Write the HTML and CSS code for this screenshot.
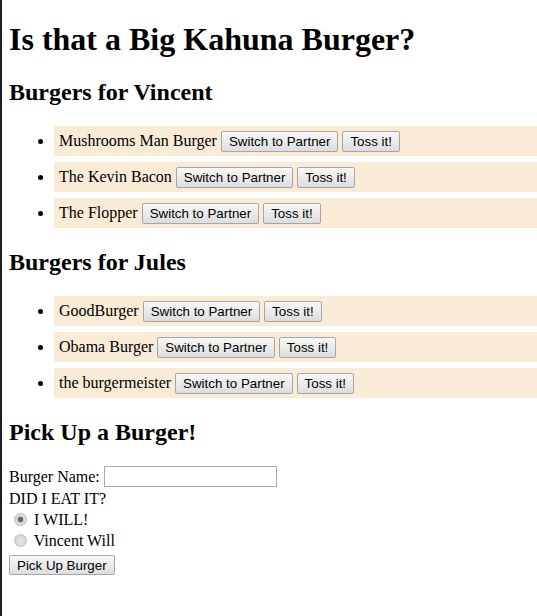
FILE: index.html
```html
<!DOCTYPE html>
<html>
<head>
<meta charset="utf-8">
<title>Burgers</title>
<link rel="stylesheet" href="styles.css">
</head>
<body>
<h1>Is that a Big Kahuna Burger?</h1>
<h2>Burgers for Vincent</h2>
<ul class="list">
  <li class="item">Mushrooms Man Burger <button class="btn">Switch to Partner</button> <button class="btn">Toss it!</button></li>
  <li class="item">The Kevin Bacon <button class="btn">Switch to Partner</button> <button class="btn">Toss it!</button></li>
  <li class="item">The Flopper <button class="btn">Switch to Partner</button> <button class="btn">Toss it!</button></li>
</ul>
<h2>Burgers for Jules</h2>
<ul class="list">
  <li class="item">GoodBurger <button class="btn">Switch to Partner</button> <button class="btn">Toss it!</button></li>
  <li class="item">Obama Burger <button class="btn">Switch to Partner</button> <button class="btn">Toss it!</button></li>
  <li class="item">the burgermeister <button class="btn">Switch to Partner</button> <button class="btn">Toss it!</button></li>
</ul>
<h2>Pick Up a Burger!</h2>
<form class="form">
  <div class="row row-name"><label>Burger Name: <input type="text" class="field"></label></div>
  <div class="row row-q">DID I EAT IT?</div>
  <div class="row row-opt"><label><input type="radio" name="eaten" class="radio" checked> I WILL!</label></div>
  <div class="row row-opt"><label><input type="radio" name="eaten" class="radio"> Vincent Will</label></div>
  <button type="button" class="btn btn-submit">Pick Up Burger</button>
</form>
</body>
</html>
```
FILE: styles.css
```css
html {
  border-left: 2px solid #1f1f1f;
  min-height: 100%;
  box-sizing: border-box;
}
body {
  margin: 0 0 8px 7px;
  font-family: "Liberation Serif", "Times New Roman", serif;
  font-size: 16px;
  color: #000;
}
h1 {
  font-size: 32px;
  margin: 21px 0;
}
h2 {
  font-size: 24px;
  margin: 21px 0 20px;
}
.list {
  padding-left: 40px;
  margin: 16px 0;
}
.item {
  background: #faebd7;
  margin: 0 0 6px 5px;
  padding: 4px 5px;
  height: 30px;
  box-sizing: border-box;
  line-height: 22px;
}
.btn {
  font-family: "Liberation Sans", Arial, sans-serif;
  font-size: 13.333px;
  color: #000;
  background: linear-gradient(#f8f8f8, #dddddd);
  border: 1px solid #a6a6a6;
  border-radius: 2px;
  padding: 2px 7px;
  margin: 0;
  line-height: 15px;
}
.form {
  margin: 0;
}
.row {
  line-height: 20px;
  height: 21px;
}
.row-name {
  height: 23px;
}
.field {
  width: 173px;
  height: 21px;
  box-sizing: border-box;
  border: 1px solid #a9a9a9;
  padding: 1px 2px;
  margin: 0;
  font-size: 13.333px;
  vertical-align: 1px;
}
.radio {
  appearance: none;
  width: 13px;
  height: 13px;
  border-radius: 50%;
  border: 1px solid #bdbdbd;
  background: radial-gradient(circle, #e6e6e6 0, #d0d0d0 100%);
  margin: 0 3px 0 5px;
  box-sizing: border-box;
  vertical-align: -1px;
}
.radio:checked {
  background: radial-gradient(circle, #666 0, #666 2.5px, #d8d8d8 3.2px, #e2e2e2 100%);
}
.btn-submit {
  margin-top: 3px;
  height: 20px;
  padding-top: 1px;
  padding-bottom: 1px;
}
```
